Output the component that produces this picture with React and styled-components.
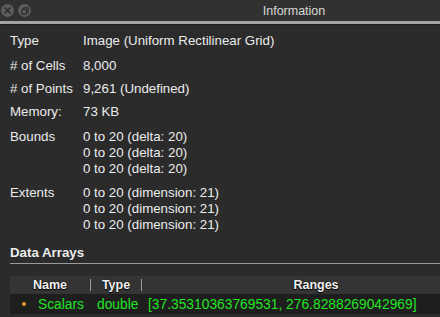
import React from "react";
import styled, { createGlobalStyle } from "styled-components";

const Global = createGlobalStyle`
  html, body { margin: 0; padding: 0; background: #2b2b2b; }
  body { font-family: "Liberation Sans", Arial, sans-serif; overflow: hidden; }
`;

const Window = styled.div`
  width: 440px;
  height: 317px;
  background: #2b2b2b;
  color: #e6e6e6;
  display: flex;
  flex-direction: column;
  overflow: hidden;
`;

const TitleBar = styled.div`
  height: 21px;
  background: #313131;
  display: flex;
  align-items: center;
  position: relative;
  border-bottom: 3px solid #a3a3a3;
  box-shadow: 0 1px 0 #1e1e1e;
`;

const TitleButtons = styled.div`
  display: flex;
  gap: 4px;
  padding-left: 1px;
`;

const CircleBtn = styled.div`
  width: 13px;
  height: 13px;
  border-radius: 50%;
  background: #5c5c5c;
  display: flex;
  align-items: center;
  justify-content: center;
`;

const Title = styled.div`
  position: absolute;
  left: 0;
  right: 0;
  text-align: center;
  font-size: 12.5px;
  color: #d8d8d8;
  padding-left: 148px;
`;

const Body = styled.div`
  padding: 9px 0 0 10px;
  display: flex;
  flex-direction: column;
`;

const Row = styled.div`
  display: grid;
  grid-template-columns: 73px 1fr;
  font-size: 13.3px;
  line-height: 16px;
  margin-bottom: ${(p) => p.$gap}px;
`;

const Label = styled.div`
  color: #ececec;
`;

const Values = styled.div`
  display: flex;
  flex-direction: column;
  color: #ececec;
`;

const SectionTitle = styled.div`
  font-weight: bold;
  font-size: 13.3px;
  line-height: 16px;
  margin-top: 4px;
  padding-bottom: 2px;
  border-bottom: 1px solid #9a9a9a;
  color: #ececec;
`;

const Table = styled.div`
  margin-top: 12px;
  width: 480px;
  display: flex;
  flex-direction: column;
`;

const HeaderRow = styled.div`
  display: grid;
  grid-template-columns: 81px 51px 1fr;
  height: 18px;
  background: #343434;
  align-items: center;
`;

const HeaderCell = styled.div`
  font-size: 12.5px;
  font-weight: bold;
  color: #f2f2f2;
  text-align: center;
  text-shadow: 0 0 1px #000, 0 1px 1px #000;
  height: 12px;
  line-height: 12px;
  border-right: ${(p) => (p.$sep ? "1px solid #9a9a9a" : "none")};
`;

const DataRow = styled.div`
  display: flex;
  align-items: center;
  height: 20px;
  background: #1e1e1e;
  font-size: 13.8px;
  color: #22e422;
`;

const Bullet = styled.span`
  width: 4px;
  height: 4px;
  border-radius: 50%;
  background: #f0a020;
  margin-left: 12px;
  margin-right: 12px;
`;

const Cell = styled.span`
  width: ${(p) => (p.$w ? `${p.$w}px` : "auto")};
  white-space: nowrap;
`;

const rows = [
  ["Type", ["Image (Uniform Rectilinear Grid)"], 9],
  ["# of Cells", ["8,000"], 7],
  ["# of Points", ["9,261 (Undefined)"], 7],
  ["Memory:", ["73 KB"], 9],
  ["Bounds", ["0 to 20 (delta: 20)", "0 to 20 (delta: 20)", "0 to 20 (delta: 20)"], 8],
  ["Extents", ["0 to 20 (dimension: 21)", "0 to 20 (dimension: 21)", "0 to 20 (dimension: 21)"], 8],
];

export default function App() {
  return (
    <>
      <Global />
      <Window>
        <TitleBar>
          <TitleButtons>
            <CircleBtn>
              <svg width="7" height="7" viewBox="0 0 7 7">
                <path d="M1 1L6 6M6 1L1 6" stroke="#2c2c2c" strokeWidth="1.6" strokeLinecap="round" />
              </svg>
            </CircleBtn>
            <CircleBtn>
              <svg width="8" height="8" viewBox="0 0 8 8">
                <rect x="2.5" y="0.8" width="4.7" height="4.7" rx="0.8" fill="none" stroke="#2c2c2c" strokeWidth="1.2" />
                <rect x="0.8" y="2.5" width="4.7" height="4.7" rx="0.8" fill="#5c5c5c" stroke="#2c2c2c" strokeWidth="1.2" />
              </svg>
            </CircleBtn>
          </TitleButtons>
          <Title>Information</Title>
        </TitleBar>
        <Body>
          {rows.map(([l, vs, g]) => (
            <Row key={l} $gap={g}>
              <Label>{l}</Label>
              <Values>
                {vs.map((v, i) => (
                  <div key={i}>{v}</div>
                ))}
              </Values>
            </Row>
          ))}
          <SectionTitle>Data Arrays</SectionTitle>
          <Table>
            <HeaderRow>
              <HeaderCell $sep>Name</HeaderCell>
              <HeaderCell $sep>Type</HeaderCell>
              <HeaderCell>Ranges</HeaderCell>
            </HeaderRow>
            <DataRow>
              <Bullet />
              <Cell $w={59}>Scalars</Cell>
              <Cell $w={51}>double</Cell>
              <Cell>[37.35310363769531, 276.8288269042969]</Cell>
            </DataRow>
          </Table>
        </Body>
      </Window>
    </>
  );
}
